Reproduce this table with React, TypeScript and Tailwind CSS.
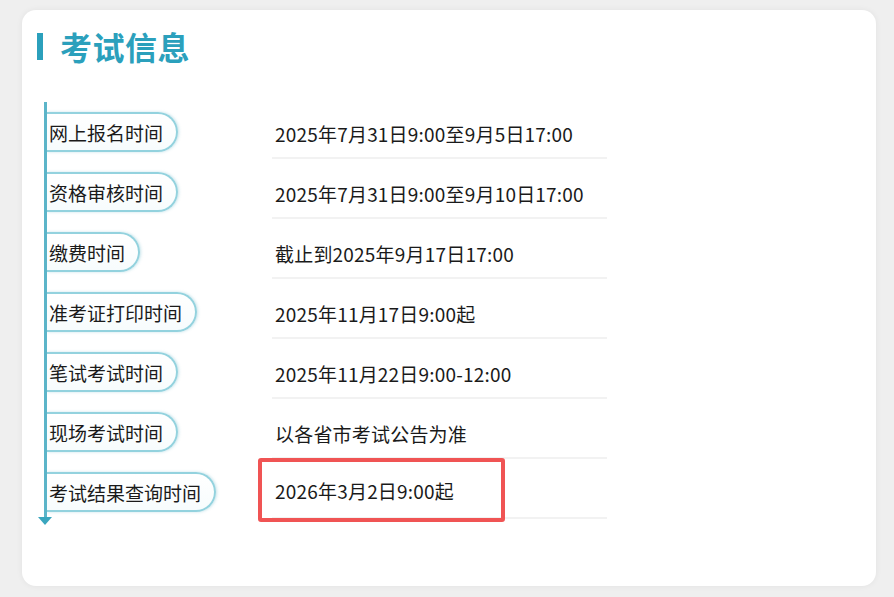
import React from 'react'

type Row = {
  label: string
  value: string
  highlight?: boolean
}

const rows: Row[] = [
  { label: '网上报名时间', value: '2025年7月31日9:00至9月5日17:00' },
  { label: '资格审核时间', value: '2025年7月31日9:00至9月10日17:00' },
  { label: '缴费时间', value: '截止到2025年9月17日17:00' },
  { label: '准考证打印时间', value: '2025年11月17日9:00起' },
  { label: '笔试考试时间', value: '2025年11月22日9:00-12:00' },
  { label: '现场考试时间', value: '以各省市考试公告为准' },
  { label: '考试结果查询时间', value: '2026年3月2日9:00起', highlight: true },
]

const font = { fontFamily: '"Noto Sans CJK SC", "Noto Sans", sans-serif' }

export default function App() {
  return (
    <div className="w-[894px] h-[597px] bg-[#efefef] overflow-hidden pt-[10px] pl-[22px]" style={font}>
      <div className="w-[854px] h-[576px] bg-white rounded-[14px] shadow-[0_0_6px_rgba(0,0,0,0.06)]">
        {/* title */}
        <div className="flex items-center h-[36px] pt-[18px] box-content pl-[15px] gap-[17px]">
          <div className="w-[6px] h-[27px] bg-[#2ba0bc]" />
          <h2 className="text-[32px] leading-[36px] font-bold text-[#2ba0bc] tracking-[0.5px]">考试信息</h2>
        </div>

        {/* timeline */}
        <div className="relative ml-[22px] mt-[38px] w-[585px] border-l-[3px] border-[#5cb5c9]">
          {rows.map((row) => (
            <div key={row.label} className="flex h-[60px]">
              <div className="w-[225px] flex items-center">
                <div className="h-[40px] flex items-center pl-[2px] pr-[13px] border-2 border-l-0 border-[#93d2de] rounded-r-full bg-gradient-to-b from-white to-[#f7fcfd] shadow-[1px_0_3px_rgba(90,175,195,0.35)]">
                  <span className="text-[19px] leading-none text-[#1a1a1a] whitespace-nowrap">{row.label}</span>
                </div>
              </div>
              <div
                className={
                  row.highlight
                    ? 'relative w-[335px] h-[57px] pl-[3px] pt-[16px] border-b-2 border-[#f2f2f2]'
                    : 'relative w-[335px] h-[57px] pl-[3px] pt-[19px] border-b-2 border-[#f2f2f2]'
                }
              >
                <span className="text-[19px] leading-[26px] tracking-[0.2px] text-[#1a1a1a] whitespace-nowrap">{row.value}</span>
                {row.highlight && (
                  <div className="absolute left-[-14px] top-[-4px] w-[247px] h-[64px] border-4 border-[#f05454] rounded-[3px] bg-white/0" />
                )}
              </div>
            </div>
          ))}
          <div className="absolute left-[-9px] bottom-[-3px] w-0 h-0 border-l-[7px] border-r-[7px] border-t-[8px] border-l-transparent border-r-transparent border-t-[#3aa6be]" />
        </div>
      </div>
    </div>
  )
}
